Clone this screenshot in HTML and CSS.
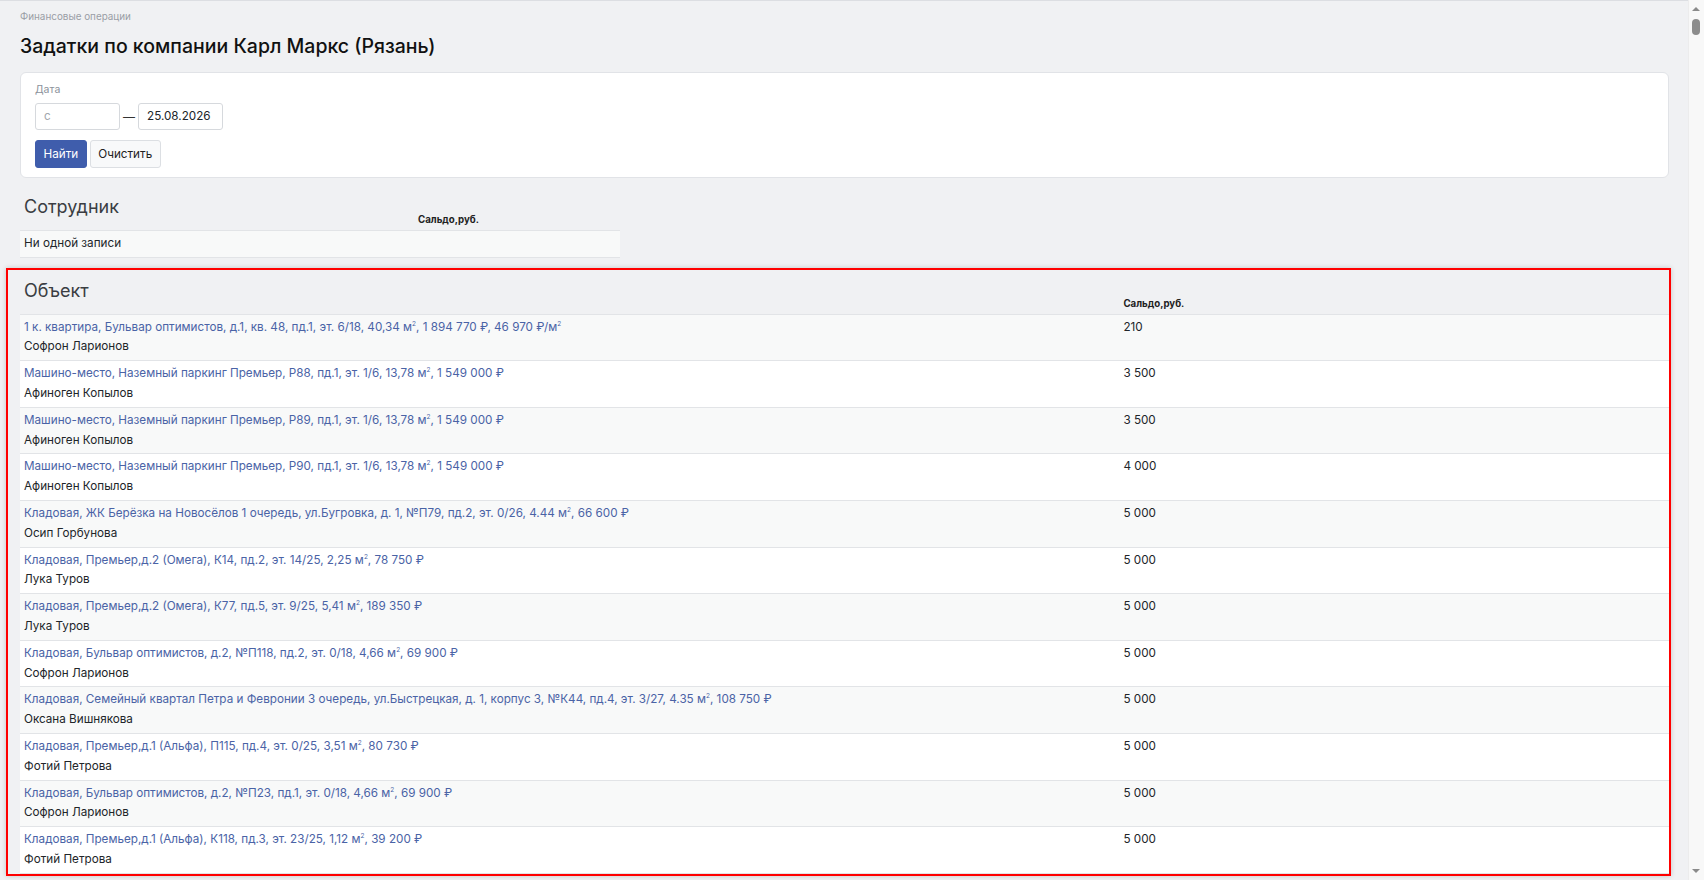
FILE: index.html
```html
<!DOCTYPE html>
<html lang="ru">
<head>
  <meta charset="UTF-8" />
  <title>Задатки по компании Карл Маркс (Рязань)</title>
  <link rel="stylesheet" href="styles.css">
</head>
<body>
  <div class="page">
    <div class="crumb">Финансовые операции</div>
    <h1 class="page-title">Задатки по компании Карл Маркс (Рязань)</h1>

    <!-- фильтр -->
    <form class="card filter">
      <div class="field-label">Дата</div>
      <div class="date-range">
        <input type="text" class="input" placeholder="с">
        <span class="dash">—</span>
        <input type="text" class="input" value="25.08.2026">
      </div>
      <div class="actions">
        <button type="button" class="btn btn-primary">Найти</button>
        <button type="button" class="btn btn-light">Очистить</button>
      </div>
    </form>

    <!-- сотрудники -->
    <table class="grid grid-small">
      <thead>
        <tr>
          <th class="col-name"><div class="section-title">Сотрудник</div></th>
          <th class="col-sum">Сальдо,руб.</th>
        </tr>
      </thead>
      <tbody>
        <tr><td colspan="2">Ни одной записи</td></tr>
      </tbody>
    </table>

    <!-- объекты -->
    <div class="highlight">
      <table class="grid">
        <thead>
          <tr>
            <th class="col-wide"><div class="section-title">Объект</div></th>
            <th class="col-sum">Сальдо,руб.</th>
          </tr>
        </thead>
        <tbody>
          <tr>
            <td><a href="#">1 к. квартира, Бульвар оптимистов, д.1, кв. 48, пд.1, эт. 6/18, 40,34 м<sup>2</sup>, 1 894 770 ₽, 46 970 ₽/м<sup>2</sup></a><div>Софрон Ларионов</div></td>
            <td>210</td>
          </tr>
          <tr>
            <td><a href="#">Машино-место, Наземный паркинг Премьер, Р88, пд.1, эт. 1/6, 13,78 м<sup>2</sup>, 1 549 000 ₽</a><div>Афиноген Копылов</div></td>
            <td>3 500</td>
          </tr>
          <tr>
            <td><a href="#">Машино-место, Наземный паркинг Премьер, Р89, пд.1, эт. 1/6, 13,78 м<sup>2</sup>, 1 549 000 ₽</a><div>Афиноген Копылов</div></td>
            <td>3 500</td>
          </tr>
          <tr>
            <td><a href="#">Машино-место, Наземный паркинг Премьер, Р90, пд.1, эт. 1/6, 13,78 м<sup>2</sup>, 1 549 000 ₽</a><div>Афиноген Копылов</div></td>
            <td>4 000</td>
          </tr>
          <tr>
            <td><a href="#">Кладовая, ЖК Берёзка на Новосёлов 1 очередь, ул.Бугровка, д. 1, №П79, пд.2, эт. 0/26, 4.44 м<sup>2</sup>, 66 600 ₽</a><div>Осип Горбунова</div></td>
            <td>5 000</td>
          </tr>
          <tr>
            <td><a href="#">Кладовая, Премьер,д.2 (Омега), К14, пд.2, эт. 14/25, 2,25 м<sup>2</sup>, 78 750 ₽</a><div>Лука Туров</div></td>
            <td>5 000</td>
          </tr>
          <tr>
            <td><a href="#">Кладовая, Премьер,д.2 (Омега), К77, пд.5, эт. 9/25, 5,41 м<sup>2</sup>, 189 350 ₽</a><div>Лука Туров</div></td>
            <td>5 000</td>
          </tr>
          <tr>
            <td><a href="#">Кладовая, Бульвар оптимистов, д.2, №П118, пд.2, эт. 0/18, 4,66 м<sup>2</sup>, 69 900 ₽</a><div>Софрон Ларионов</div></td>
            <td>5 000</td>
          </tr>
          <tr>
            <td><a href="#">Кладовая, Семейный квартал Петра и Февронии 3 очередь, ул.Быстрецкая, д. 1, корпус 3, №К44, пд.4, эт. 3/27, 4.35 м<sup>2</sup>, 108 750 ₽</a><div>Оксана Вишнякова</div></td>
            <td>5 000</td>
          </tr>
          <tr>
            <td><a href="#">Кладовая, Премьер,д.1 (Альфа), П115, пд.4, эт. 0/25, 3,51 м<sup>2</sup>, 80 730 ₽</a><div>Фотий Петрова</div></td>
            <td>5 000</td>
          </tr>
          <tr>
            <td><a href="#">Кладовая, Бульвар оптимистов, д.2, №П23, пд.1, эт. 0/18, 4,66 м<sup>2</sup>, 69 900 ₽</a><div>Софрон Ларионов</div></td>
            <td>5 000</td>
          </tr>
          <tr>
            <td><a href="#">Кладовая, Премьер,д.1 (Альфа), К118, пд.3, эт. 23/25, 1,12 м<sup>2</sup>, 39 200 ₽</a><div>Фотий Петрова</div></td>
            <td>5 000</td>
          </tr>
        </tbody>
      </table>
    </div>

    <div class="more"></div>
  </div>

  <!-- полоса прокрутки окна -->
  <div class="scrollbar">
    <span class="arrow arrow-up"></span>
    <span class="thumb"></span>
    <span class="arrow arrow-down"></span>
  </div>
</body>
</html>
```

FILE: styles.css
```css
body {
  margin: 0;
  background: #f0f1f3;
  border-top: 1px solid #dcdee2;
  font-family: Inter, "Noto Sans", sans-serif;
  font-size: 11.7px;
  color: #212529;
}

.page {
  padding: 0 35px 0 20px;
}

.crumb {
  padding-top: 8px;
  font-size: 9.9px;
  line-height: 14px;
  color: #9a9ea6;
}

.page-title {
  margin: 8.5px 0 12.5px;
  font-size: 19.5px;
  line-height: 28px;
  font-weight: 500;
  color: #111;
}

.card {
  background: #fff;
  border: 1px solid #e1e3e7;
  border-radius: 6px;
}

.filter {
  margin: 0;
  padding: 9.6px 14px 9.3px;
}

.field-label {
  font-size: 10.5px;
  line-height: 14px;
  color: #8c929b;
  margin-bottom: 6px;
}

.date-range {
  display: flex;
  align-items: center;
  gap: 3px;
}

.input {
  box-sizing: border-box;
  width: 85px;
  height: 27.5px;
  padding: 0 8px;
  border: 1px solid #d6d9dd;
  border-radius: 3px;
  font-family: inherit;
  font-size: 11.7px;
  color: #212529;
}

.input::placeholder {
  color: #a2a6ad;
}

.dash {
  font-size: 12px;
  color: #333;
}

.actions {
  display: flex;
  gap: 3px;
  margin-top: 10.3px;
}

.btn {
  box-sizing: border-box;
  height: 27.7px;
  padding: 0 7.5px;
  border-radius: 3px;
  font-family: inherit;
  font-size: 11.7px;
  cursor: pointer;
}

.btn-primary {
  background: #3f5dac;
  border: 1px solid #3f5dac;
  color: #fff;
}

.btn-light {
  background: #f8f9fa;
  border: 1px solid #dcdfe3;
  color: #222;
}

.grid {
  width: 100%;
  border-collapse: collapse;
}

.grid-small {
  width: 600px;
  margin-top: 15px;
}

.grid th {
  padding: 3px 4px;
  text-align: left;
  vertical-align: bottom;
  font-size: 9.7px;
  line-height: 14px;
  font-weight: 700;
  color: #222;
}

.grid th.col-name {
  width: 386px;
}

.grid th.col-wide {
  width: 66.67%;
}

.section-title {
  margin-bottom: 9px;
  font-size: 18px;
  line-height: 22px;
  font-weight: 400;
  color: #3a3d42;
}

.grid td {
  padding: 3px 4px;
  line-height: 19.8px;
  vertical-align: top;
  border-top: 1px solid #e2e4e7;
  border-bottom: 1px solid #e2e4e7;
}

.grid tbody tr:nth-child(odd) td {
  background: #f8f9f9;
}

.grid tbody tr:nth-child(even) td {
  background: #fff;
}

.grid a {
  color: #4a63a6;
  text-decoration: none;
}

.grid sup {
  font-size: 6.5px;
  line-height: 0;
}

.highlight {
  margin: 9.5px -2px 0 -14px;
  padding: 7px 0 0 12px;
  border: 2px solid #ff0000;
  box-shadow: 0 0 5px rgba(0, 0, 0, 0.18);
}

.more {
  height: 400px;
}

.scrollbar {
  position: fixed;
  top: 0;
  right: 0;
  width: 15px;
  height: 100%;
  background: #f8f8f8;
  border-left: 1px solid #ececec;
}

.arrow {
  position: absolute;
  left: 3px;
  width: 0;
  height: 0;
  border-left: 4px solid transparent;
  border-right: 4px solid transparent;
}

.arrow-up {
  top: 7px;
  border-bottom: 4px solid #8a8a8a;
}

.arrow-down {
  bottom: 7px;
  border-top: 4px solid #8a8a8a;
}

.thumb {
  position: absolute;
  top: 19px;
  left: 3px;
  width: 8px;
  height: 16px;
  border-radius: 4px;
  background: #8c8c8c;
}
```
